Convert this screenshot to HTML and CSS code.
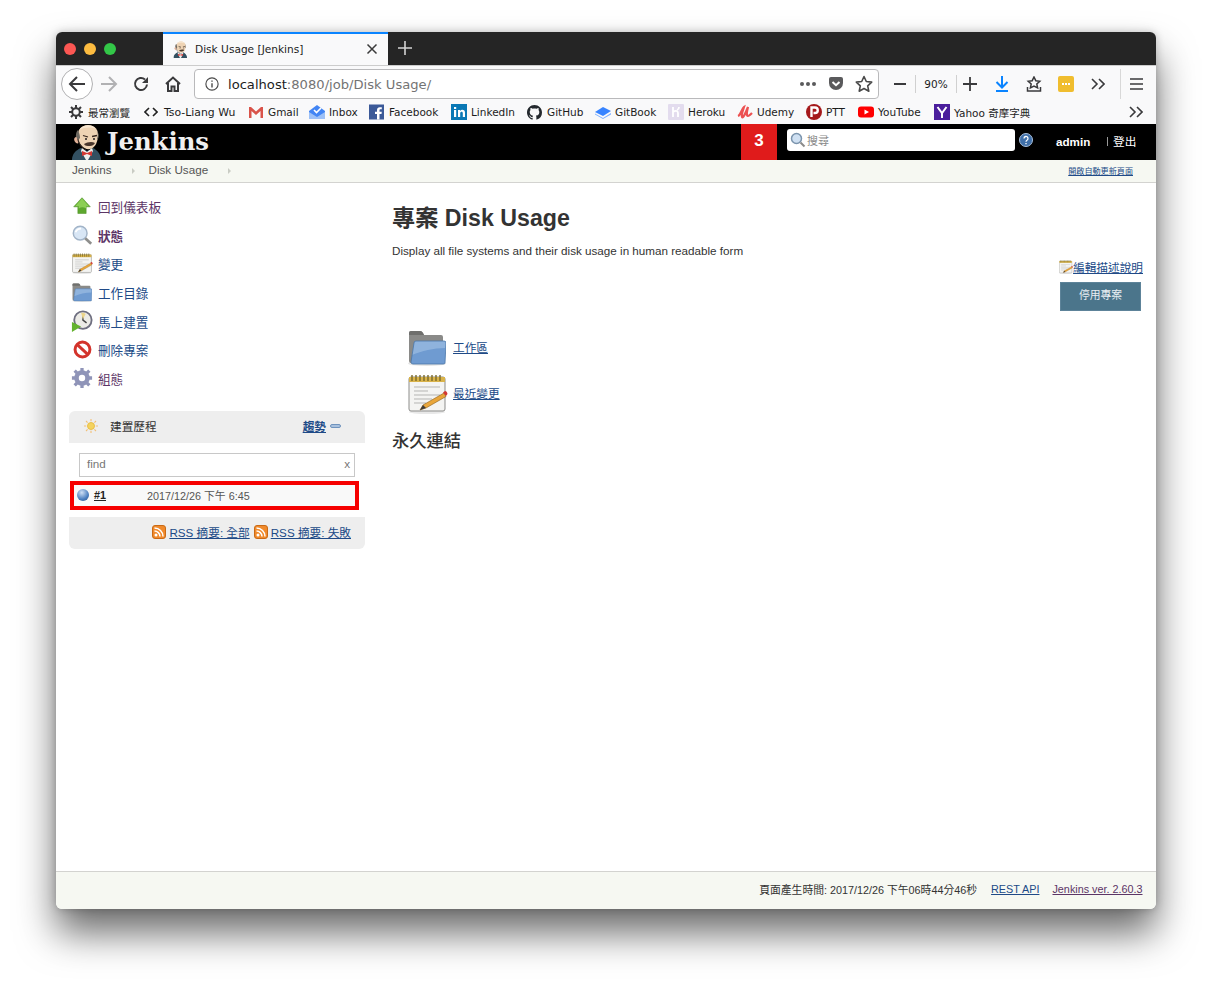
FILE: index.html
```html
<!DOCTYPE html>
<html lang="zh-Hant">
<head>
<meta charset="utf-8">
<title>Disk Usage [Jenkins]</title>
<link rel="stylesheet" href="styles.css">
</head>
<body>
<svg class="defs" width="0" height="0" aria-hidden="true">
  <defs>
    <symbol id="butler" viewBox="0 0 30 36">
      <path d="M0 36c0-6 4-10 9-12l6 3 6-3c4 2 8 6 8 12z" fill="#335061"/>
      <path d="M10 24l5 4 5-4 1 3-5 9h-2l-5-9z" fill="#f0f0ee"/>
      <path d="M10 27l5 2 5-2v5l-5-2-5 2z" fill="#d33833"/>
      <path d="M6 15C4 6 10 1 16 1c7 0 11 5 10 12-1 6-3 11-8 12-6 1-10-4-12-10z" fill="#eed3b4"/>
      <path d="M5 17C3 12 4 8 6 6c1 3 2 5 2 8-1 1-2 2-3 3zM25 15c1-3 1-6 0-8 2 2 2 6 1 8z" fill="#6f6a62"/>
      <path d="M7 6c3-5 12-7 17-1-5-2-11-2-17 1z" fill="#f7e6d0"/>
      <path d="M4.500 13c-2 0-3 2-2 4s3 3 4 2z" fill="#e3b298"/>
      <path d="M11 11.500l5 1.500M20 12.500l5-1" stroke="#3a2a22" stroke-width="1.300" fill="none"/>
      <circle cx="14" cy="15" r="1" fill="#231f20"/>
      <circle cx="22" cy="15" r="1" fill="#231f20"/>
      <path d="M12 20c3-2 8-3 11-1-1 2-3 3-5 3-3 0-5 0-6-2z" fill="#49362c"/>
      <path d="M6 15C7 20 10 25 14 25.500" stroke="#3a2a22" stroke-width=".8" fill="none"/>
    </symbol>
    <symbol id="folder" viewBox="0 0 38 36">
      <ellipse cx="19" cy="33.500" rx="19" ry="2.500" fill="#e4e4e4"/>
      <path d="M1 3q0-2 2-2h9q2 0 3 2l1 2h17q2 0 2 2v26H3q-2 0-2-2z" fill="#8a8a88"/>
      <path d="M1 3q0-2 2-2h9q2 0 3 2l1 2H1z" fill="#6f6f6d"/>
      <path d="M6 13q0-2 2-2h28q2 0 2 2l-1 20q0 1-2 1H5q-2 0-2-2z" fill="#6f9bd1"/>
      <path d="M6 13q0-2 2-2h28q2 0 2 2l-.3 5C25 18 14 21 4 25z" fill="#9cbde3" opacity=".7"/>
      <path d="M6 13q0-2 2-2h28q2 0 2 2l-1 20q0 1-2 1H5q-2 0-2-2z" fill="none" stroke="#4a76a8" stroke-width=".8"/>
    </symbol>
    <symbol id="notepad" viewBox="0 0 40 40">
      <ellipse cx="19" cy="38" rx="18" ry="2" fill="#e8e8e8"/>
      <rect x="1" y="3" width="36" height="34" rx="2" fill="#f4f4f2" stroke="#8d8d8b"/>
      <rect x="1" y="3" width="36" height="5" fill="#d9b34a"/>
      <path d="M4 1v6M8 1v6M12 1v6M16 1v6M20 1v6M24 1v6M28 1v6M32 1v6" stroke="#7a6a2a" stroke-width="1.400"/>
      <path d="M6 13h26M6 17h14M6 21h26M6 25h18M6 29h12" stroke="#b5b5b3"/>
      <path d="M15 31l21-12 2 3.500-20 11.500-6 2z" fill="#e9a63a" stroke="#8c5e1a" stroke-width=".6"/>
      <path d="M35 18.500l2-1.500q2 0 2.500 3l-1.500 2z" fill="#d33833"/>
      <path d="M15 31l3 3-6 2z" fill="#3b3b3b"/>
    </symbol>
    <symbol id="rss" viewBox="0 0 14 14">
      <rect x=".5" y=".5" width="13" height="13" rx="2.500" fill="#f08a2c" stroke="#c96a16"/>
      <circle cx="4" cy="10" r="1.500" fill="#fff"/>
      <path d="M2.500 6a5.500 5.500 0 0 1 5.500 5.500M2.500 3a8.500 8.500 0 0 1 8.500 8.500" stroke="#fff" stroke-width="1.500" fill="none"/>
    </symbol>
  </defs>
</svg>

<div class="window">
  <div class="tabbar">
    <div class="lights"><span class="light red"></span><span class="light amber"></span><span class="light green"></span></div>
    <div class="tab">
      <svg class="tab-fav" viewBox="0 0 30 36"><use href="#butler"/></svg>
      <span class="tab-title">Disk Usage [Jenkins]</span>
      <svg class="tab-x" viewBox="0 0 12 12"><path d="M1.500 1.500l9 9M10.500 1.500l-9 9" stroke="#3b3b3b" stroke-width="1.500"/></svg>
    </div>
    <svg class="newtab" viewBox="0 0 16 16"><path d="M8 1v14M1 8h14" stroke="#d4d4d4" stroke-width="1.600"/></svg>
  </div>

  <div class="navbar">
    <div class="tool back"><svg viewBox="0 0 18 18" width="18" height="18"><path d="M17 9H2M9 2L2 9l7 7" fill="none" stroke="#3a3a3c" stroke-width="2"/></svg></div>
    <div class="tool"><svg viewBox="0 0 18 18" width="18" height="18"><path d="M1 9h15M9 2l7 7-7 7" fill="none" stroke="#b1b1b3" stroke-width="2"/></svg></div>
    <div class="tool"><svg viewBox="0 0 16 16" width="16" height="16"><path d="M14 8.500A6 6 0 1 1 12 3.500" fill="none" stroke="#3a3a3c" stroke-width="2"/><path d="M15 1v6H9z" fill="#3a3a3c"/></svg></div>
    <div class="tool"><svg viewBox="0 0 16 16" width="16" height="16"><path d="M1 8l7-6.500L15 8M3 7v8h3.500v-4.500h3V15H13V7" fill="none" stroke="#3a3a3c" stroke-width="2"/></svg></div>
    <div class="url">
      <svg class="info" viewBox="0 0 16 16" width="14" height="14"><circle cx="8" cy="8" r="7" fill="none" stroke="#4a4a4a" stroke-width="1.300"/><path d="M8 7v5M8 4v1.500" stroke="#4a4a4a" stroke-width="1.600"/></svg>
      <span class="url-text">localhost<span class="url-dim">:8080/job/Disk Usage/</span></span>
      <span class="url-dots"><i></i><i></i><i></i></span>
      <svg class="url-ic" viewBox="0 0 16 16" width="16" height="16"><path d="M1 3q0-2 2-2h10q2 0 2 2v4a7 7 0 0 1-14 0z" fill="#5a5a5c"/><path d="M4.500 6L8 9.200 11.500 6" fill="none" stroke="#fff" stroke-width="2"/></svg>
      <svg class="url-ic star" viewBox="0 0 18 18" width="18" height="18"><path d="M9 1.500l2.300 5 5.400.6-4 3.700 1.100 5.400L9 13.500 4.200 16.200l1.100-5.400-4-3.700 5.400-.6z" fill="none" stroke="#4a4a4a" stroke-width="1.600" stroke-linejoin="round"/></svg>
    </div>
    <div class="tool zoom-minus"><svg viewBox="0 0 14 14" width="14" height="14"><path d="M1 7h12" stroke="#3a3a3c" stroke-width="1.800"/></svg></div>
    <div class="zoom-level">90%</div>
    <div class="tool zoom-plus"><svg viewBox="0 0 14 14" width="14" height="14"><path d="M0 7h14M7 0v14" stroke="#3a3a3c" stroke-width="1.800"/></svg></div>
    <div class="tool"><svg viewBox="0 0 14 16" width="14" height="16"><path d="M7 0v11M1.500 6L7 11.500 12.500 6M1 15h12" fill="none" stroke="#0a84ff" stroke-width="2"/></svg></div>
    <div class="tool"><svg viewBox="0 0 16 16" width="16" height="16"><path d="M8 1l1.800 3.700 4 .5-3 2.700.8 4L8 10l-3.600 1.900.8-4-3-2.700 4-.5z" fill="none" stroke="#3a3a3c" stroke-width="1.500"/><path d="M1.500 11v4h13v-4" fill="none" stroke="#3a3a3c" stroke-width="1.500"/></svg></div>
    <div class="tool"><span class="ext"><i></i><i></i><i></i></span></div>
    <div class="tool"><svg viewBox="0 0 14 12" width="14" height="12"><path d="M1 1l5 5-5 5M8 1l5 5-5 5" fill="none" stroke="#3a3a3c" stroke-width="1.600"/></svg></div>
    <div class="tool menu"><svg viewBox="0 0 13 12" width="13" height="12"><path d="M0 1h13M0 6h13M0 11h13" stroke="#3a3a3c" stroke-width="1.600"/></svg></div>
  </div>

  <div class="bookmarks">
    <span class="bm bm-wide"><svg viewBox="0 0 14 14" width="14" height="14"><circle cx="7" cy="7" r="3.800" fill="none" stroke="#3a3a3c" stroke-width="2"/><path d="M7 0v3M7 11v3M0 7h3M11 7h3M2 2l2 2M10 10l2 2M12 2l-2 2M4 10l-2 2" stroke="#3a3a3c" stroke-width="2"/></svg>最常瀏覽</span>
    <span class="bm bm-wider"><svg viewBox="0 0 14 12" width="14" height="12"><path d="M5 2L1 6l4 4M9 2l4 4-4 4" fill="none" stroke="#222" stroke-width="1.600"/></svg>Tso-Liang Wu</span>
    <span class="bm"><svg viewBox="0 0 16 16" width="16" height="16"><path d="M1 3h2l5 4.500L13 3h2v11h-2.500V7L8 11 3.500 7v7H1z" fill="#d9534a"/></svg>Gmail</span>
    <span class="bm"><svg viewBox="0 0 16 16" width="16" height="16"><path d="M0 7l8-6 8 6v8H0z" fill="#4285f4"/><path d="M0 8l8 5 8-5v7H0z" fill="#9cc0f7"/><path d="M5 6l2.500 2.500L12 4" fill="none" stroke="#fff" stroke-width="1.600"/></svg>Inbox</span>
    <span class="bm"><svg viewBox="0 0 16 16" width="16" height="16"><rect width="15" height="15" y=".5" fill="#3b5998"/><path d="M10.500 15.500V10h2l.3-2.300h-2.300V6.300c0-.7.200-1.100 1.100-1.100h1.200v-2H10.800C9 3.200 8 4.300 8 6v1.700H6V10h2v5.500z" fill="#fff"/></svg>Facebook</span>
    <span class="bm"><svg viewBox="0 0 16 16" width="16" height="16"><rect width="16" height="16" fill="#0a78b5"/><path d="M3 6h2.200v7H3zM3 3h2.200v2H3zM7 6h2.100v1c.5-.8 1.300-1.200 2.200-1.200 1.800 0 2.700 1 2.700 3V13h-2.200V9.200c0-1-.4-1.500-1.200-1.500-.9 0-1.400.6-1.400 1.600V13H7z" fill="#fff"/></svg>LinkedIn</span>
    <span class="bm bm-wide"><svg viewBox="0 0 16 16" width="15" height="15"><path fill="#24292e" d="M8 0C3.580 0 0 3.580 0 8c0 3.540 2.290 6.530 5.470 7.590.4.070.55-.17.55-.38 0-.19-.01-.82-.01-1.490-2.010.37-2.530-.49-2.690-.94-.09-.23-.48-.94-.82-1.130-.28-.15-.68-.52-.01-.53.63-.01 1.080.58 1.230.82.720 1.210 1.870.870 2.330.660.070-.520.280-.870.510-1.070-1.780-.200-3.640-.890-3.640-3.950 0-.870.310-1.590.820-2.150-.080-.200-.360-1.020.080-2.120 0 0 .670-.210 2.200.820.640-.180 1.320-.270 2-.270s1.360.090 2 .270c1.530-1.040 2.200-.820 2.200-.820.440 1.100.160 1.920.080 2.120.510.560.820 1.270.820 2.150 0 3.070-1.870 3.750-3.650 3.950.290.250.540.730.540 1.480 0 1.070-.010 1.930-.010 2.200 0 .210.150.460.550.380A8.010 8.010 0 0 0 16 8c0-4.420-3.580-8-8-8z"/></svg>GitHub</span>
    <span class="bm"><svg viewBox="0 0 16 16" width="16" height="16"><path d="M0 8l8-5 8 4-8 5z" fill="#3884ff"/><path d="M0 9.500l8 4.500 8-5v1.500l-8 4.500-8-4.500z" fill="#7fb0ff"/></svg>GitBook</span>
    <span class="bm"><svg viewBox="0 0 16 16" width="16" height="16"><rect width="16" height="16" rx="1" fill="#e3dcee"/><path d="M5 3v10M5 8c3-2 5-1 5 1v4M11 3c0 1.500-.5 2.500-2 3" fill="none" stroke="#fff" stroke-width="1.800"/></svg>Heroku</span>
    <span class="bm"><svg viewBox="0 0 16 16" width="16" height="16"><path d="M1 12c3-1 4-8 6-9-1 3-3 8-2 10s4-5 6-10c-1 4-2 9 0 9 1 0 3-2 4-3" fill="none" stroke="#ec5252" stroke-width="2.200"/></svg>Udemy</span>
    <span class="bm"><svg viewBox="0 0 16 16" width="16" height="16"><circle cx="8" cy="8" r="8" fill="#a5191b"/><path d="M5.500 13V3.500h3.500a2.700 2.700 0 0 1 0 5.500H7.500" fill="none" stroke="#fff" stroke-width="2.400"/></svg>PTT</span>
    <span class="bm"><svg viewBox="0 0 16 16" width="16" height="16"><rect y="2.500" width="16" height="11" rx="3" fill="#f00"/><path d="M6.500 5.500L11 8l-4.500 2.500z" fill="#fff"/></svg>YouTube</span>
    <span class="bm"><svg viewBox="0 0 16 16" width="16" height="16"><rect width="16" height="16" fill="#4b1e9c"/><path d="M3.500 3L8 9l4.500-6M8 9v5" fill="none" stroke="#fff" stroke-width="2"/></svg>Yahoo 奇摩字典</span>
    <svg class="bm-more" viewBox="0 0 14 12" width="14" height="12"><path d="M1 1l5 5-5 5M8 1l5 5-5 5" fill="none" stroke="#3a3a3c" stroke-width="1.600"/></svg>
  </div>

  <header class="jk-header">
    <svg class="jk-logo" viewBox="0 0 30 36"><use href="#butler"/></svg>
    <span class="jk-word">Jenkins</span>
    <span class="jk-count">3</span>
    <div class="jk-search">
      <svg viewBox="0 0 16 16" width="16" height="16"><circle cx="6.500" cy="6.500" r="5" fill="#cfe0f2" stroke="#7b94ad" stroke-width="1.500"/><path d="M10.500 10.500l4 4" stroke="#8a8a8a" stroke-width="2"/></svg>
      <span>搜尋</span>
    </div>
    <svg class="jk-help" viewBox="0 0 14 14" width="14" height="14"><circle cx="7" cy="7" r="6.500" fill="#3f6fa8" stroke="#a9c1de"/><path d="M5 5.500a2 2 0 1 1 3 1.700c-.7.400-1 .8-1 1.500M7 10v1.300" fill="none" stroke="#fff" stroke-width="1.300"/></svg>
    <span class="jk-user">admin</span>
    <span class="jk-logout">登出</span>
  </header>

  <nav class="crumbs">
    <span class="crumb">Jenkins</span><span class="crumb-arrow"></span>
    <span class="crumb">Disk Usage</span><span class="crumb-arrow"></span>
    <a class="autorefresh">開啟自動更新頁面</a>
  </nav>

  <div class="page">
    <aside class="side">
      <ul class="tasks">
        <li class="task visited"><svg viewBox="0 0 24 24" width="20" height="20"><path d="M12 2L2 13h5v8h10v-8h5z" fill="#5da72e" stroke="#4b8e22" stroke-width=".6"/><path d="M12 3l-8 9h4v3c3-2 6-2 9 0v-3h3z" fill="#8ccf55"/></svg><span>回到儀表板</span></li>
        <li class="task visited strong"><svg viewBox="0 0 24 24" width="22" height="22"><circle cx="10" cy="10" r="7.500" fill="#d8e6f5" stroke="#a2b4c8" stroke-width="1.600"/><path d="M5 9c1-3 4-4 6-4" stroke="#fff" stroke-width="2" fill="none"/><path d="M15.500 15.500l6.500 6" stroke="#8e8e8c" stroke-width="3"/></svg><span>狀態</span></li>
        <li class="task"><svg viewBox="0 0 40 40" width="21" height="21"><use href="#notepad"/></svg><span>變更</span></li>
        <li class="task"><svg viewBox="0 0 38 36" width="20" height="19"><use href="#folder"/></svg><span>工作目錄</span></li>
        <li class="task"><svg viewBox="0 0 24 24" width="22" height="22"><circle cx="13" cy="11" r="9.500" fill="#ecebe6" stroke="#6f6f80" stroke-width="2"/><path d="M13 4v7l4 3" stroke="#444" stroke-width="1.500" fill="none"/><path d="M11 3a8 8 0 0 1 5 1l-3 6z" fill="#ecd58a"/><path d="M1 13l10 5-10 6z" fill="#64b32e"/></svg><span>馬上建置</span></li>
        <li class="task"><svg viewBox="0 0 24 24" width="21" height="21"><circle cx="12" cy="12" r="8.500" fill="#fff" stroke="#d3342c" stroke-width="3.400"/><path d="M6 6.500l12 11" stroke="#d3342c" stroke-width="3.400"/></svg><span>刪除專案</span></li>
        <li class="task visited"><svg viewBox="0 0 24 24" width="22" height="22"><circle cx="12" cy="12" r="6" fill="none" stroke="#8f94b8" stroke-width="5"/><path d="M12 1v5M12 18v5M1 12h5M18 12h5M4 4l3.500 3.500M16.500 16.500L20 20M20 4l-3.500 3.500M7.500 16.500L4 20" stroke="#8f94b8" stroke-width="3.600"/></svg><span>組態</span></li>
      </ul>

      <section class="history">
        <div class="hist-head">
          <svg viewBox="0 0 16 16" width="14" height="14"><circle cx="8" cy="8" r="4" fill="#f4d35e" stroke="#e8b93a"/><path d="M8 0v2.500M8 13.500V16M0 8h2.500M13.500 8H16M2.300 2.300l1.800 1.800M11.900 11.900l1.800 1.800M13.700 2.300l-1.800 1.800M4.100 11.900l-1.800 1.800" stroke="#f2c078" stroke-width="1.300"/></svg>
          <span class="hist-title">建置歷程</span>
          <a class="hist-trend">趨勢</a>
          <span class="hist-dash"></span>
        </div>
        <div class="hist-body">
          <div class="find"><span>find</span><span class="find-x">x</span></div>
          <div class="run">
            <span class="ball"></span>
            <a class="run-id">#1</a>
            <span class="run-date">2017/12/26 下午 6:45</span>
          </div>
        </div>
        <div class="hist-foot">
          <svg viewBox="0 0 14 14" width="14" height="14"><use href="#rss"/></svg><a>RSS 摘要: 全部</a>
          <svg viewBox="0 0 14 14" width="14" height="14"><use href="#rss"/></svg><a>RSS 摘要: 失敗</a>
        </div>
      </section>
    </aside>

    <main class="main">
      <div class="main-top">
        <div class="main-intro">
          <h1>專案 Disk Usage</h1>
          <p>Display all file systems and their disk usage in human readable form</p>
        </div>
        <div class="actions">
          <div class="edit-desc"><svg viewBox="0 0 40 40" width="14" height="14"><use href="#notepad"/></svg><a>編輯描述說明</a></div>
          <div class="disable">停用專案</div>
        </div>
      </div>
      <div class="links">
        <div class="link-row"><svg viewBox="0 0 38 36" width="38" height="36"><use href="#folder"/></svg><a class="gap-folder">工作區</a></div>
        <div class="link-row"><svg viewBox="0 0 40 40" width="40" height="40"><use href="#notepad"/></svg><a>最近變更</a></div>
      </div>
      <h2>永久連結</h2>
    </main>
  </div>

  <footer class="foot">
    <span>頁面產生時間: 2017/12/26 下午06時44分46秒</span>
    <a class="foot-rest">REST API</a>
    <a class="foot-ver">Jenkins ver. 2.60.3</a>
  </footer>
</div>
</body>
</html>
```

FILE: styles.css
```css
* { box-sizing: border-box; }
html, body { margin: 0; height: 989px; overflow: hidden; background: #fff; }
body {
  padding: 32px 56px 80px;
  font-family: "Liberation Sans", "Noto Sans CJK TC", sans-serif;
  font-size: 11.66px;
  color: #333;
}
.defs { position: absolute; }
svg { flex: none; display: block; }
a { color: #204a87; text-decoration: underline; }

.window {
  height: 877px;
  display: flex;
  flex-direction: column;
  background: #fff;
  border-radius: 6px;
  overflow: hidden;
  box-shadow: 0 24px 38px rgba(0,0,0,.58), 0 0 8px rgba(0,0,0,.22);
}

/* Tab strip */
.tabbar { height: 33px; flex: none; display: flex; align-items: stretch; background: #252525; }
.lights { width: 107px; display: flex; align-items: center; gap: 8px; padding-left: 8px; }
.light { width: 12px; height: 12px; border-radius: 50%; }
.red { background: #fc5753; }
.amber { background: #fdbc40; }
.green { background: #33c748; }
.tab {
  width: 225px;
  display: flex;
  align-items: center;
  background: #f9f9fa;
  border-top: 2px solid #0a84ff;
  padding: 0 10px 1px;
}
.tab-fav { width: 15px; height: 17px; margin-right: 7px; }
.tab-title { flex: 1; font-family: "DejaVu Sans", sans-serif; font-size: 10.6px; color: #1c1c1c; }
.tab-x { width: 12px; height: 12px; }
.newtab { width: 16px; height: 16px; margin: 8px 0 0 9px; }

/* Toolbar */
.navbar { height: 35px; flex: none; display: flex; align-items: center; padding: 2px 0 0 5px; background: #f9f9fa; border-top: 1px solid #ccc; }
.tool { width: 32px; height: 30px; flex: none; display: flex; align-items: center; justify-content: center; }
.back { border: 1px solid #b1b1b3; border-radius: 50%; background: #fff; height: 32px; }
.url {
  width: 685px;
  height: 30px;
  margin: 0 6px 0 5px;
  display: flex;
  align-items: center;
  padding: 0 5px 0 10px;
  background: #fff;
  border: 1px solid #b9b9bb;
  border-radius: 4px;
}
.url-text { flex: 1; margin-left: 9px; padding-top: 1px; font-family: "DejaVu Sans", sans-serif; font-size: 13.12px; color: #1c1c1c; }
.url-dim { color: #737373; }
.url-dots { display: flex; gap: 2px; margin-right: 12px; }
.url-dots i { width: 4px; height: 4px; border-radius: 50%; background: #5a5a5c; }
.url-ic.star { margin-left: 11px; }
.zoom-minus { width: 31px; border-right: 1px solid #d0d0d0; height: 18px; }
.zoom-level { width: 41px; height: 18px; border-right: 1px solid #d0d0d0; text-align: center; font-family: "DejaVu Sans", sans-serif; font-size: 10.5px; line-height: 18px; color: #1c1c1c; }
.zoom-plus { width: 26px; margin-right: 3px; }
.ext { width: 16px; height: 16px; border-radius: 2px; background: #f0bd2e; display: flex; align-items: center; justify-content: center; gap: 1px; }
.ext i { width: 2px; height: 2px; background: #fff; }
.menu { margin-left: 6px; border-left: 1px solid #d8d8d8; }

/* Bookmarks */
.bookmarks {
  height: 24px;
  flex: none;
  display: grid;
  grid-template-columns: 75px 104px 61px 60px 82px 76px 68px 73px 69px 69px 52px 76px 1fr auto;
  align-items: center;
  padding-left: 13px;
  background: #f9f9fa;
  font-family: "DejaVu Sans", "Noto Sans CJK TC", sans-serif;
  font-size: 10.5px;
  color: #1c1c1c;
}
.bm { display: flex; align-items: center; gap: 4px; white-space: nowrap; }
.bm-wide { gap: 5px; }
.bm-wider { gap: 6px; font-size: 10.85px; }
.bm-more { margin-right: 13px; }

/* Jenkins header */
.jk-header { height: 36px; flex: none; display: flex; align-items: center; background: #000; color: #fff; overflow: hidden; }
.jk-logo { width: 30px; height: 36px; margin: 0 5px 0 16px; }
.jk-word { width: 634px; margin-bottom: 2px; font-family: "DejaVu Serif", "Liberation Serif", serif; font-weight: 700; font-size: 24.3px; color: #f0f0f0; }
.jk-count { width: 36px; height: 36px; background: #e01b1b; text-align: center; font-weight: 700; font-size: 17px; line-height: 33px; }
.jk-search { width: 228px; height: 22px; margin: 0 0 4px 10px; display: flex; align-items: center; gap: 1px; padding-left: 3px; background: #fff; border-radius: 3px; color: #888; font-size: 11px; }
.jk-help { margin: 0 0 4px 4px; }
.jk-user { margin-left: 23px; width: 51px; margin-bottom: 1px; font-weight: 700; font-size: 11.66px; }
.jk-logout { border-left: 1px solid #999; padding-left: 5px; line-height: 9px; margin-bottom: 1px; font-size: 11.66px; }

/* Breadcrumbs */
.crumbs { height: 23px; flex: none; display: flex; align-items: center; padding: 0 23px 4px 16px; background: #f6f8f2; border-bottom: 1px solid #d3d3d0; color: #555; }
.crumb-arrow { width: 0; height: 0; margin: 3px 14px 0 20px; border-left: 3px solid #c9ccc4; border-top: 3px solid transparent; border-bottom: 3px solid transparent; }
.autorefresh { margin-left: auto; font-size: 8.1px; margin-top: 2px; }

/* Page */
.page { flex: 1; display: flex; min-height: 0; }
.side { width: 336px; flex: none; padding: 9px 27px 0 13px; }
.tasks { list-style: none; margin: 0; padding: 0; }
.task { height: 28.7px; display: grid; grid-template-columns: 26px 1fr; column-gap: 3px; align-items: center; font-size: 12.6px; color: #204a87; }
.task svg { justify-self: center; }
.task.visited { color: #5c3566; }
.task.strong { font-weight: 700; }

.history { margin-top: 18px; background: #eee; border-radius: 6px; overflow: hidden; }
.hist-head { height: 32px; display: flex; align-items: center; padding: 0 24px 2px 15px; font-size: 11.66px; color: #333; }
.hist-title { margin-left: 12px; flex: 1; }
.hist-trend { font-weight: 700; }
.hist-dash { width: 11px; height: 4px; margin-left: 4px; background: #a9c1de; border: 1px solid #6f93bd; border-radius: 2px; }
.hist-body { height: 74px; background: #fff; padding: 10px 1px 0 1px; }
.find { height: 24px; margin: 0 9px; border: 1px solid #c8c8c8; display: flex; align-items: center; justify-content: space-between; padding: 0 4px 2px 7px; color: #777; font-size: 11.66px; }
.run { width: 289px; height: 29px; margin: 4px 0 0 0; display: flex; align-items: center; border: 4px solid #f60000; background: #f9f9f9; padding: 0 0 1px 3px; font-size: 10.8px; color: #555; }
.ball { width: 12px; height: 12px; border-radius: 50%; background: radial-gradient(circle at 40% 30%, #cfe0f5, #4b7fc0 60%, #2c4f80); }
.run-id { margin-left: 5px; width: 53px; font-weight: 700; color: #222; }
.hist-foot { height: 32px; display: flex; align-items: center; justify-content: flex-end; gap: 3px; padding: 0 14px 2px 0; font-size: 11.66px; }
.hist-foot a + svg { margin-left: 1px; }

.main { flex: 1; min-width: 0; padding: 19px 14px 0 0; }
.main-top { display: flex; justify-content: space-between; }
h1 { margin: 0; font-size: 23.2px; line-height: 32px; color: #333; font-weight: 700; }
.main-intro p { margin: 9px 0 0; line-height: 16px; }
.actions { width: 83px; margin-top: 56px; display: flex; flex-direction: column; align-items: flex-end; margin-right: -1px; }
.edit-desc { display: flex; align-items: center; white-space: nowrap; }
.disable { width: 81px; height: 29px; margin: 7px 2px 0 0; background: #4b758b; color: #e8eef2; text-align: center; line-height: 25px; font-size: 10.8px; border: 1px solid #5d8399; }
.links { margin-top: 14px; padding-left: 16px; }
.link-row { display: flex; align-items: center; gap: 5px; height: 46px; }
.link-row a { margin-bottom: 4px; }
.gap-folder { margin-left: 2px; }
h2 { margin: 12px 0 0; font-size: 17.3px; line-height: 24px; font-weight: 500; color: #333; }

/* Footer */
.foot { height: 38px; flex: none; display: flex; align-items: center; justify-content: flex-end; padding: 0 13.5px 3px 0; background: #f6f8f2; border-top: 1px solid #d3d3d0; font-size: 10.8px; color: #333; }
.foot-rest { margin-left: 14px; }
.foot-ver { margin-left: 13px; color: #5c3566; }
```
